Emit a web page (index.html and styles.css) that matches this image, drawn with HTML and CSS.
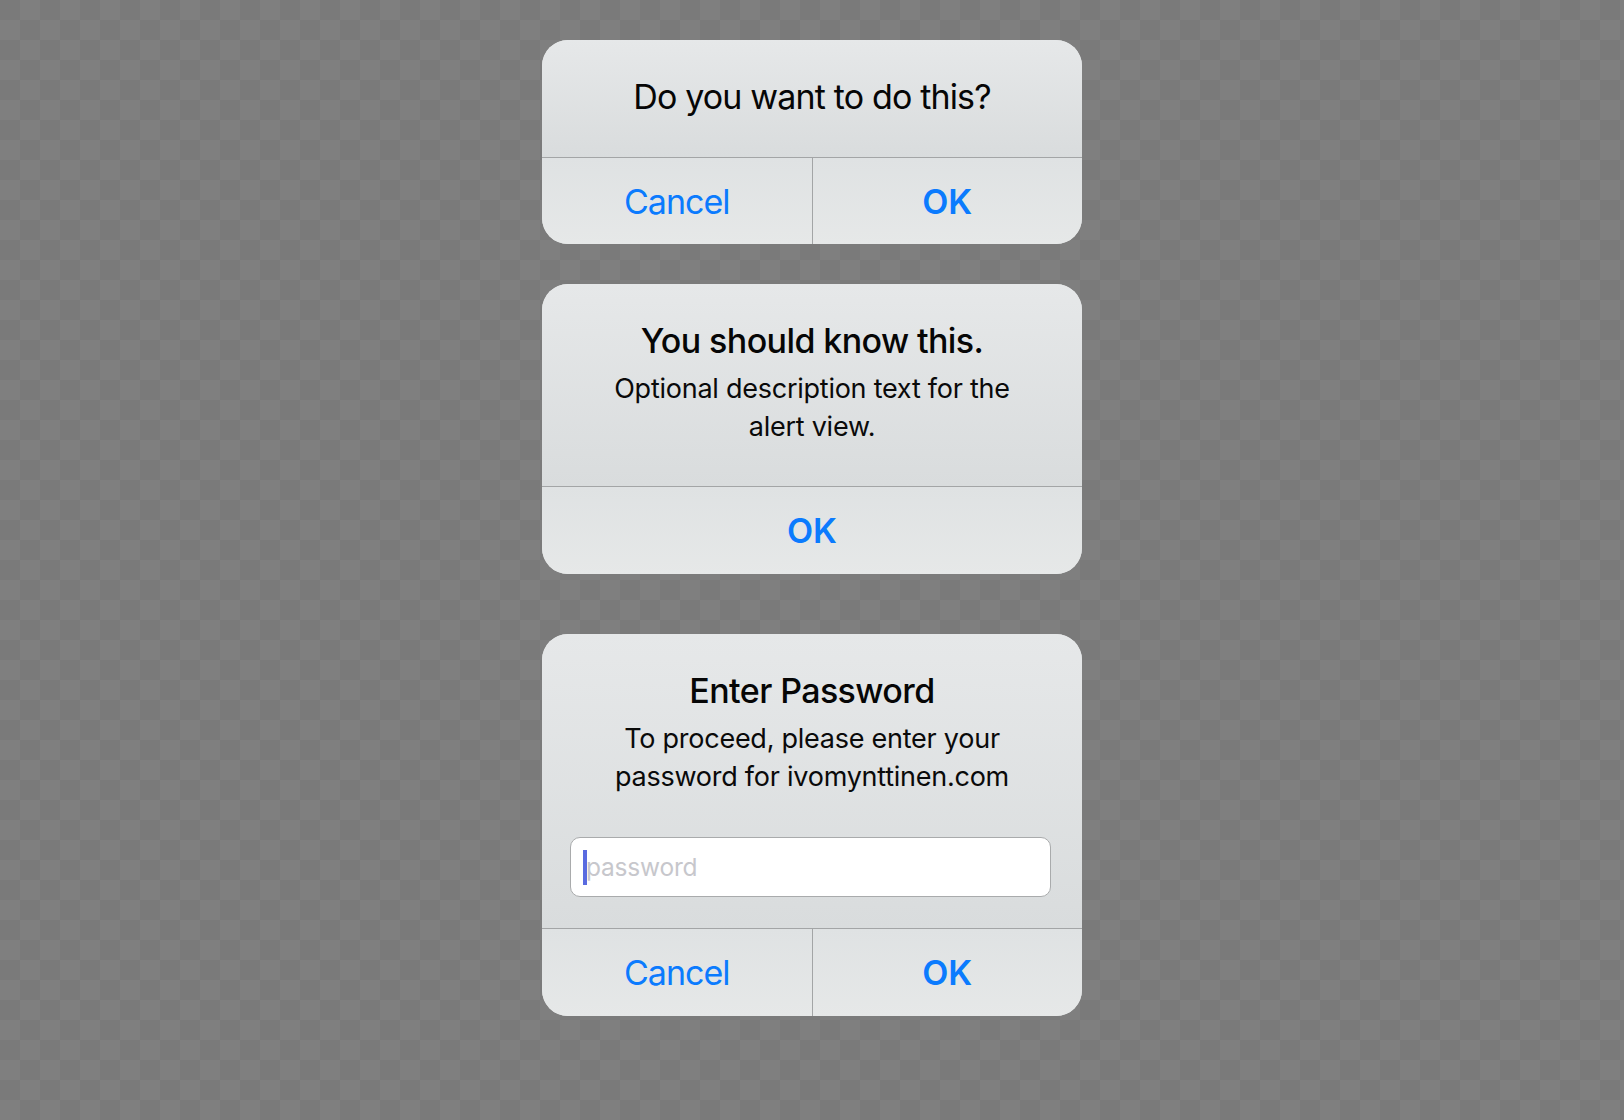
FILE: index.html
```html
<!DOCTYPE html>
<html lang="en">
<head>
<meta charset="utf-8">
<title>Alerts</title>
<link rel="stylesheet" href="styles.css">
</head>
<body>
<main class="stage">
  <section class="alert alert-first">
    <div class="alert-body">
      <h2 class="alert-title regular">Do you want to do this?</h2>
    </div>
    <div class="alert-actions">
      <button class="action">Cancel</button>
      <button class="action strong">OK</button>
    </div>
  </section>

  <section class="alert alert-second">
    <div class="alert-body">
      <h2 class="alert-title">You should know this.</h2>
      <p class="alert-message">Optional description text for the<br>alert view.</p>
    </div>
    <div class="alert-actions">
      <button class="action strong">OK</button>
    </div>
  </section>

  <section class="alert alert-third">
    <div class="alert-body with-field">
      <h2 class="alert-title">Enter Password</h2>
      <p class="alert-message">To proceed, please enter your<br>password for ivomynttinen.com</p>
      <div class="field">
        <span class="caret"></span><span class="placeholder">password</span>
      </div>
    </div>
    <div class="alert-actions">
      <button class="action">Cancel</button>
      <button class="action strong">OK</button>
    </div>
  </section>
</main>
</body>
</html>
```

FILE: styles.css
```css
html, body {
  margin: 0;
  padding: 0;
}

body {
  width: 1624px;
  height: 1120px;
  overflow: hidden;
  background-color: #7a7a7a;
  background-image:
    linear-gradient(45deg, #7f7f7f 25%, transparent 25%, transparent 75%, #7f7f7f 75%),
    linear-gradient(45deg, #7f7f7f 25%, transparent 25%, transparent 75%, #7f7f7f 75%);
  background-size: 40px 40px;
  background-position: 0 0, 20px 20px;
  font-family: Inter, "Noto Sans", "Liberation Sans", sans-serif;
  -webkit-font-smoothing: antialiased;
}

.stage {
  display: flex;
  flex-direction: column;
  align-items: center;
  padding-top: 40px;
}

.alert {
  width: 540px;
  border-radius: 26px;
  overflow: hidden;
  background: #e2e4e5;
}

.alert-first { margin-bottom: 40px; }
.alert-second { margin-bottom: 60px; }

.alert-body {
  padding: 37px 30px 40px;
  text-align: center;
  background: linear-gradient(180deg, #e6e8e9 0%, #d9dcdd 100%);
}

.alert-body.with-field {
  padding-bottom: 31px;
}

.alert-title {
  margin: 0;
  font-size: 34px;
  line-height: 40px;
  font-weight: 500;
  color: #060606;
  letter-spacing: -0.6px;
}

.alert-title.regular {
  font-weight: 400;
  letter-spacing: -0.85px;
}

.alert-message {
  margin: 9px 0 0;
  font-size: 27px;
  line-height: 38px;
  font-weight: 400;
  color: #0a0a0a;
  letter-spacing: -0.25px;
}

.field {
  box-sizing: border-box;
  margin: 41px 0 0 -2px;
  width: 481px;
  height: 60px;
  border: 1px solid #a9abac;
  border-radius: 10px;
  background: #ffffff;
  display: flex;
  align-items: center;
  padding-left: 12px;
  text-align: left;
}

.caret {
  width: 4px;
  height: 35px;
  background: #5a6be0;
}

.placeholder {
  font-size: 24.5px;
  color: #c7c7cc;
  margin-left: -1px;
  letter-spacing: -0.2px;
}

.alert-actions {
  display: flex;
  border-top: 1px solid #a3a5a6;
  background: linear-gradient(180deg, #dfe2e3 0%, #e6e8e8 100%);
}

.action {
  flex: 1;
  height: 86px;
  border: 0;
  margin: 0;
  padding: 0;
  background: transparent;
  font-family: inherit;
  font-size: 34px;
  font-weight: 400;
  letter-spacing: -1px;
  color: #0b7bfe;
}

.alert-second .action,
.alert-third .action {
  height: 87px;
}

.action + .action {
  border-left: 1px solid #a3a5a6;
}

.action.strong {
  font-weight: 600;
  letter-spacing: 0;
}
```
